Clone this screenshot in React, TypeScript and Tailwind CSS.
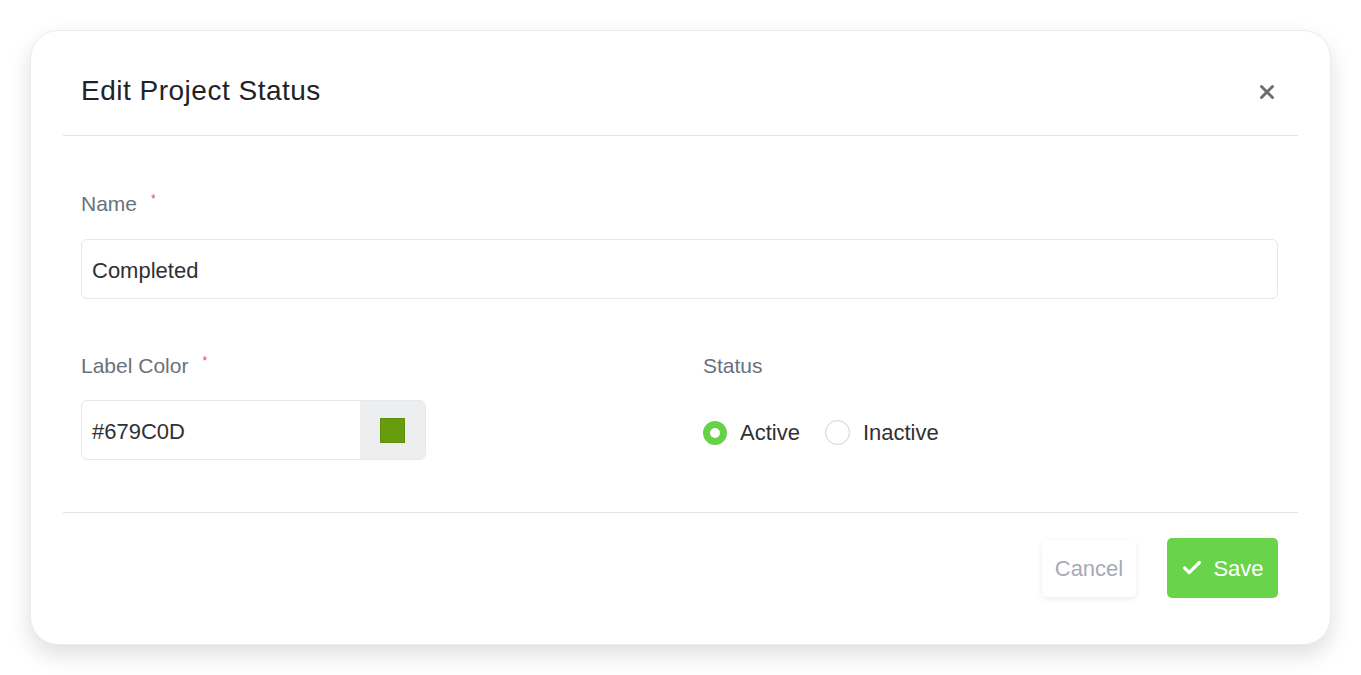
import { X, Check } from "lucide-react";

const font = { fontFamily: '"Liberation Sans", Arial, sans-serif' };

function Label({ children, required }: { children: string; required?: boolean }) {
  return (
    <div className="flex items-start text-[21px] leading-[21px] text-[#6b717b]">
      <span>{children}</span>
      {required && <span className="ml-[14px] text-[12px] leading-[12px] text-[#f0454f]">*</span>}
    </div>
  );
}

export default function App() {
  return (
    <div className="min-h-[675px] bg-white px-[30px] pt-[30px]" style={font}>
      <div className="rounded-[28px] border border-[#ececec] bg-white px-8 shadow-[0_10px_22px_rgba(0,0,0,0.13)]">
        <div className="flex items-center justify-between border-b border-[#e2e4e7] px-[18px] pb-[30px] pt-[46px]">
          <h2 className="text-[28px] leading-[28px] tracking-[0.5px] text-[#1f2329]">Edit Project Status</h2>
          <button type="button" className="mr-[2px] mt-[2px] text-[#6e6e6e]" aria-label="Close">
            <X className="size-[22px]" strokeWidth={3.2} />
          </button>
        </div>

        <div className="border-b border-[#e2e4e7] px-[18px] pb-[52px] pt-[57px]">
          <Label required>Name</Label>
          <div className="mt-[25px] mr-[2px] flex h-[60px] items-center rounded-[6px] border border-[#e6e8eb] px-[10px] pt-[2px] text-[22px] text-[#2f3133]">
            Completed
          </div>

          <div className="mt-[56px] grid grid-cols-2 gap-x-[45px]">
            <div>
              <Label required>Label Color</Label>
              <div className="mt-[24px] flex h-[60px] w-[345px] overflow-hidden rounded-[6px] border border-[#e6e8eb]">
                <div className="flex flex-1 items-center px-[10px] pt-[2px] text-[22px] text-[#2f3133]">#679C0D</div>
                <div className="flex w-[65px] items-center justify-center bg-[#eceef0]">
                  <div className="size-[25px] border border-[#5d8f0a] bg-[#679c0d]" />
                </div>
              </div>
            </div>
            <div>
              <Label>Status</Label>
              <div className="mt-[24px] flex h-[60px] items-center pt-[5px] text-[22px] text-[#2f3133]">
                <span className="size-[24px] rounded-full border-[7px] border-[#66d249] bg-white" />
                <span className="ml-[13px]">Active</span>
                <span className="ml-[25px] size-[25px] rounded-full border-[1.5px] border-[#cfd1d4] bg-white" />
                <span className="ml-[13px]">Inactive</span>
              </div>
            </div>
          </div>
        </div>

        <div className="flex items-center justify-end gap-[31px] px-[20px] pb-[46px] pt-[25px]">
          <button
            type="button"
            className="h-[57px] w-[94px] rounded-[5px] bg-white text-[22px] text-[#a6abb5] shadow-[0_2px_6px_rgba(0,0,0,0.08)]"
          >
            Cancel
          </button>
          <button
            type="button"
            className="flex h-[60px] w-[111px] items-center justify-center gap-[10px] rounded-[5px] bg-[#69d34a] text-[22px] text-white"
          >
            <Check className="size-[22px]" strokeWidth={3.5} />
            Save
          </button>
        </div>
      </div>
    </div>
  );
}
